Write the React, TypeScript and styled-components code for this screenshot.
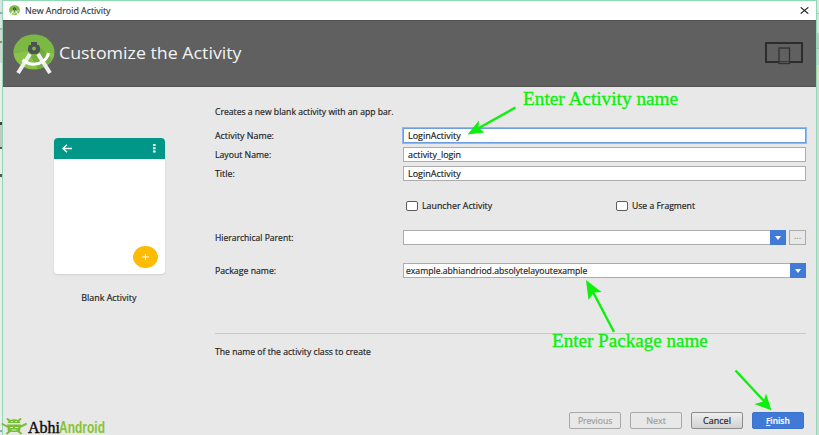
import React from "react";
import styled, { createGlobalStyle } from "styled-components";

const Global = createGlobalStyle`
  * { box-sizing: border-box; }
  html, body { margin: 0; padding: 0; overflow: hidden; }
`;

const Desktop = styled.div`
  position: relative;
  display: flex;
  width: 819px;
  height: 435px;
  overflow: hidden;
  background: #dcdcdc;
  font-family: "Open Sans", "Noto Sans", sans-serif;
  font-size: 9px;
  color: #1c1c22;
`;

const LeftEdge = styled.div`
  flex: 0 0 2px;
  background: linear-gradient(
    #dfe3e6 0 12px, #8fa9b2 12px 14px, #dfe3e6 14px 28px, #a9b6b4 28px 30px,
    #d8d8d8 30px 41px, #8a8a70 41px 43px, #d5d5d5 43px 63px, #ececec 63px 122px,
    #444 122px 125px, #c8c8c8 125px 147px, #555 147px 149px, #ececec 149px 174px,
    #555 174px 177px, #ececec 177px 430px, #9aa 430px 432px, #ececec 432px
  );
`;

const RightEdge = styled.div`
  flex: 0 0 2px;
  background: linear-gradient(
    #e2e2e2 0 13px, #b9b9b9 13px 14px, #dedede 14px 33px, #c4c4c4 33px 48px,
    #b0b0b0 48px 49px, #cfcfcf 49px 65px, #e6d9c2 65px 80px, #d9d5d9 80px
  );
`;

const Window = styled.main`
  flex: 1;
  display: flex;
  flex-direction: column;
  border: 1px solid #8ed9b0;
  border-bottom: 0;
  background: #e8e8e8;
`;

const TitleBar = styled.div`
  flex: 0 0 19px;
  display: flex;
  align-items: center;
  padding: 0 7px 0 6px;
  background: #fff;
  svg { display: block; }
`;

const Text = styled.span<{ $x?: number; $size?: number; $origin?: string }>`
  display: inline-block;
  white-space: pre;
  font-size: ${(p) => p.$size ?? 9}px;
  line-height: 1.3;
  transform: scaleX(${(p) => p.$x ?? 1});
  transform-origin: ${(p) => p.$origin ?? "left"} center;
`;

const WindowName = styled.div`
  flex: 1;
  margin-left: 5px;
  color: #333;
  -webkit-text-stroke: 0.15px #333;
`;

const Header = styled.header`
  flex: 0 0 67px;
  display: flex;
  align-items: center;
  padding: 0 13px 0 10px;
  background: #606060;
  border-top: 1px solid #505050;
  border-bottom: 1px solid #555;
  color: #f4f4f4;
`;

const HeaderTitle = styled.h1`
  flex: 1;
  margin: 0 0 0 4px;
  font-weight: 400;
  line-height: 1;
`;

const Body = styled.div`
  flex: 1;
  display: flex;
  -webkit-text-stroke: 0.18px currentColor;
`;

const Side = styled.aside`
  flex: 0 0 212px;
  display: flex;
  flex-direction: column;
  align-items: center;
  padding-top: 51px;
`;

const Phone = styled.div`
  display: flex;
  flex-direction: column;
  width: 111px;
  height: 136px;
  margin-bottom: 18px;
  border-radius: 4px;
  overflow: hidden;
  background: #fff;
  box-shadow: 0 1px 2px #cfcfcf;
`;

const AppBar = styled.div`
  display: flex;
  align-items: center;
  justify-content: space-between;
  height: 21px;
  padding: 0 9px 0 8px;
  background: #009688;
`;

const Fab = styled.div`
  display: flex;
  align-items: center;
  justify-content: center;
  width: 25px;
  height: 22px;
  margin: auto 7px 6px auto;
  border-radius: 50%;
  background: #fdbb02;
`;

const Form = styled.section`
  flex: 0 0 591px;
  display: flex;
  flex-direction: column;
`;

const Row = styled.div<{ $gap: number; $h?: number }>`
  display: flex;
  align-items: center;
  height: ${(p) => p.$h ?? 15}px;
  margin-top: ${(p) => p.$gap}px;
`;

const FieldName = styled.label`
  flex: 0 0 188px;
`;

const Field = styled.div<{ $focus?: boolean; $pad?: number }>`
  flex: 1;
  display: flex;
  align-items: center;
  height: 15px;
  padding-left: ${(p) => p.$pad ?? 4}px;
  border: 1px solid ${(p) => (p.$focus ? "#6c9fe0" : "#acacac")};
  ${(p) => p.$focus && "box-shadow: 0 0 0 1px #8db9ee;"}
  background: #fff;
  white-space: nowrap;
`;

const Drop = styled.div`
  flex: 0 0 16px;
  height: 15px;
  margin-left: -1px;
  display: flex;
  align-items: center;
  justify-content: center;
  background: #427bd5;
`;

const More = styled.div`
  flex: 0 0 17px;
  height: 15px;
  margin-left: 3px;
  border: 1px solid #acacac;
  color: #999;
  text-align: center;
  line-height: 9px;
`;

const Check = styled.label<{ $w: number }>`
  flex: 0 0 ${(p) => p.$w}px;
  display: flex;
  align-items: center;
  gap: 4px;
`;

const Box = styled.span`
  width: 12px;
  height: 10px;
  border: 1px solid #5c5c5c;
  border-radius: 2px;
  background: #fff;
`;

const Choices = styled.div`
  display: flex;
  margin-left: 3px;
`;

const Rule = styled.hr`
  width: 100%;
  height: 1px;
  margin: 55px 0 0;
  border: 0;
  background: #c9c9c9;
`;

const Buttons = styled.div`
  display: flex;
  justify-content: flex-end;
  gap: 9px;
  margin: 53px 2px 0 0;
`;

const Button = styled.button<{ $kind?: "off" | "primary" }>`
  display: flex;
  align-items: center;
  justify-content: center;
  width: 52px;
  height: 17px;
  padding: 0;
  font-family: inherit;
  border-radius: 2px;
  border: 1px solid ${(p) => (p.$kind === "primary" ? "#3a72cc" : p.$kind === "off" ? "#a8a8a8" : "#8c8c8c")};
  background: ${(p) =>
    p.$kind === "primary" ? "#4079d6" : p.$kind === "off" ? "#e8e8e8" : "linear-gradient(#eeeeee, #d2d2d2)"};
  color: ${(p) => (p.$kind === "primary" ? "#fff" : p.$kind === "off" ? "#9c9c9c" : "#1c1c22")};
  font-weight: ${(p) => (p.$kind === "primary" ? 600 : 400)};
`;

const Note = styled.div<{ $left: number; $top: number }>`
  position: absolute;
  left: ${(p) => p.$left}px;
  top: ${(p) => p.$top}px;
  font-family: "Liberation Serif", serif;
  color: #0cf00c;
  -webkit-text-stroke: 0.35px #0cf00c;
`;

const Arrows = styled.svg`
  position: absolute;
  left: 0;
  top: 0;
  pointer-events: none;
`;

const Watermark = styled.div`
  position: absolute;
  left: 1px;
  top: 417px;
  display: flex;
  align-items: flex-start;
`;

const Brand = styled.div`
  display: flex;
  width: 80px;
  height: 20px;
  margin-left: 1px;
  white-space: nowrap;
`;

const BrandHead = styled.span`
  width: 31px;
  font: 400 16px/22px "Liberation Serif", serif;
  color: #0b0b0b;
  -webkit-text-stroke: 0.4px #0b0b0b;
`;

const BrandTail = styled.span`
  font: 700 16px/22px "Liberation Sans", sans-serif;
  color: #87c52f;
  transform: scaleX(0.75);
  transform-origin: left;
`;

const StudioLogo = ({ w, h }: { w: number; h: number }) => (
  <svg width={w} height={h} viewBox="0 0 42 40" preserveAspectRatio="none">
    <ellipse cx="21" cy="18" rx="20.5" ry="17.5" fill="#7cb944" />
    <path d="M.7 20Q21 14 41.3 20A20.5 17.5 0 0 1 .7 20Z" fill="#8bc34a" />
    <path d="m25 11 14 14q-5 8-14 10l-8-14Z" fill="#659b38" opacity=".55" />
    <path d="M18 8h6v3h2l1 3v3l-3 3h-6l-3-3v-3l1-3h2Z" fill="#4c5157" />
    <circle cx="21" cy="14.5" r="2" fill="#7cb342" />
    <path d="M17 20 5 39M25 20l12 19" stroke="#eeeeee" strokeWidth="4" fill="none" />
    <path d="M9.5 26q11 8 21 1 4-3 5-8" stroke="#fff" strokeWidth="3" fill="none" />
  </svg>
);

const Chevron = () => (
  <svg width="6" height="4" viewBox="0 0 6 4"><path d="M0 0h6L3 4Z" fill="#fff" /></svg>
);

export default function App() {
  return (
    <>
      <Global />
      <Desktop>
        <LeftEdge />
        <Window>
          <TitleBar>
            <StudioLogo w={11} h={11} />
            <WindowName><Text $x={0.983}>New Android Activity</Text></WindowName>
            <svg width="9" height="7" viewBox="0 0 9 7"><path d="m.7.3 7.6 6.4m0-6.4L.7 6.7" stroke="#222" strokeWidth="1.1" /></svg>
          </TitleBar>
          <Header>
            <StudioLogo w={42} h={40} />
            <HeaderTitle><Text $size={15.5} $x={1.147}>Customize the Activity</Text></HeaderTitle>
            <svg width="38" height="23" viewBox="0 0 38 23">
              <rect x="1" y="1" width="36" height="19" fill="none" stroke="#2c2c2c" strokeWidth="2" />
              <rect x="14" y="6" width="10.500" height="15.500" fill="#606060" stroke="#303030" strokeWidth="1.3" />
              <path d="M14 19.500h10" stroke="#3b3b3b" />
            </svg>
          </Header>
          <Body>
            <Side>
              <Phone>
                <AppBar>
                  <svg width="10" height="9" viewBox="0 0 10 9"><path d="M5 .7.9 4.5 5 8.3M1 4.5h9" fill="none" stroke="#fff" strokeWidth="1.3" /></svg>
                  <svg width="3" height="9" viewBox="0 0 3 9"><path d="M0 0h2.6v2H0zM0 3.3h2.6v2H0zM0 6.6h2.6v2H0z" fill="#fff" /></svg>
                </AppBar>
                <Fab><svg width="7" height="6" viewBox="0 0 7 6"><path d="M3.5 0v6M0 3h7" stroke="#fff" strokeWidth="1.1" /></svg></Fab>
              </Phone>
              <Text $origin="center" $x={0.99}>Blank Activity</Text>
            </Side>
            <Form>
              <Row $gap={17}><Text $x={0.957}>Creates a new blank activity with an app bar.</Text></Row>
              <Row $gap={9}>
                <FieldName><Text $x={0.985}>Activity Name:</Text></FieldName>
                <Field $focus><Text>LoginActivity</Text></Field>
              </Row>
              <Row $gap={4}>
                <FieldName><Text $x={0.965}>Layout Name:</Text></FieldName>
                <Field><Text $x={0.99}>activity_login</Text></Field>
              </Row>
              <Row $gap={4}>
                <FieldName><Text $x={0.98}>Title:</Text></FieldName>
                <Field><Text>LoginActivity</Text></Field>
              </Row>
              <Row $gap={17}>
                <FieldName />
                <Choices>
                  <Check $w={210}><Box /><Text $x={0.98}>Launcher Activity</Text></Check>
                  <Check $w={100}><Box /><Text $x={0.955}>Use a Fragment</Text></Check>
                </Choices>
              </Row>
              <Row $gap={17}>
                <FieldName><Text $x={0.95}>Hierarchical Parent:</Text></FieldName>
                <Field /><Drop><Chevron /></Drop><More>...</More>
              </Row>
              <Row $gap={18}>
                <FieldName><Text $x={0.97}>Package name:</Text></FieldName>
                <Field $pad={2}><Text $x={0.96}>example.abhiandriod.absolytelayoutexample</Text></Field>
                <Drop><Chevron /></Drop>
              </Row>
              <Rule />
              <Row $gap={10}><Text $x={0.96}>The name of the activity class to create</Text></Row>
              <Buttons>
                <Button $kind="off"><Text $origin="center" $x={0.95}>Previous</Text></Button>
                <Button $kind="off"><Text $origin="center">Next</Text></Button>
                <Button><Text $origin="center">Cancel</Text></Button>
                <Button $kind="primary"><Text $origin="center" $x={0.93}><u>F</u>inish</Text></Button>
              </Buttons>
            </Form>
          </Body>
        </Window>
        <RightEdge />

        <Note $left={523} $top={88}><Text $size={18} $x={1.07}>Enter Activity name</Text></Note>
        <Note $left={552} $top={330}><Text $size={18} $x={1.06}>Enter Package name</Text></Note>
        <Arrows width="819" height="435" viewBox="0 0 819 435">
          <g stroke="#0cf00c" strokeWidth="2.4" fill="#0cf00c">
            <path d="M515.5 107.500 478 128.500" />
            <path d="m467.500 134.500 11.500-14-.500 7 6 5Z" stroke="none" />
            <path d="m614 332-21-40" />
            <path d="m586 280 15.500 12-7.500.5-5.500 7.500Z" stroke="none" />
            <path d="m735.500 370.500 30 32" />
            <path d="m771.500 410.500-17-6.500 9-2.500 2.500-8Z" stroke="none" />
          </g>
        </Arrows>
        <Watermark>
          <svg width="26" height="18" viewBox="0 0 26 18">
            <path d="M8 3.500q5-2.500 10 0l1.500 2.500h-13ZM6 7.500h14l-1 7.500H7Z" fill="#79bf35" />
            <path d="M6.500 2 9 4m10.500-2L17 4M1.500 7 6 9.500m14 0L25 7M8 15l-2 1.500m12-1.500 2 1.500" stroke="#79bf35" strokeWidth="2" strokeLinecap="round" />
            <path d="M10 4.500h1.500m3 0H16M9 10.500h3m2 0h3M10.500 13h5" stroke="#e8f2dc" strokeWidth=".9" />
          </svg>
          <Brand><BrandHead>Abhi</BrandHead><BrandTail>Android</BrandTail></Brand>
        </Watermark>
      </Desktop>
    </>
  );
}
